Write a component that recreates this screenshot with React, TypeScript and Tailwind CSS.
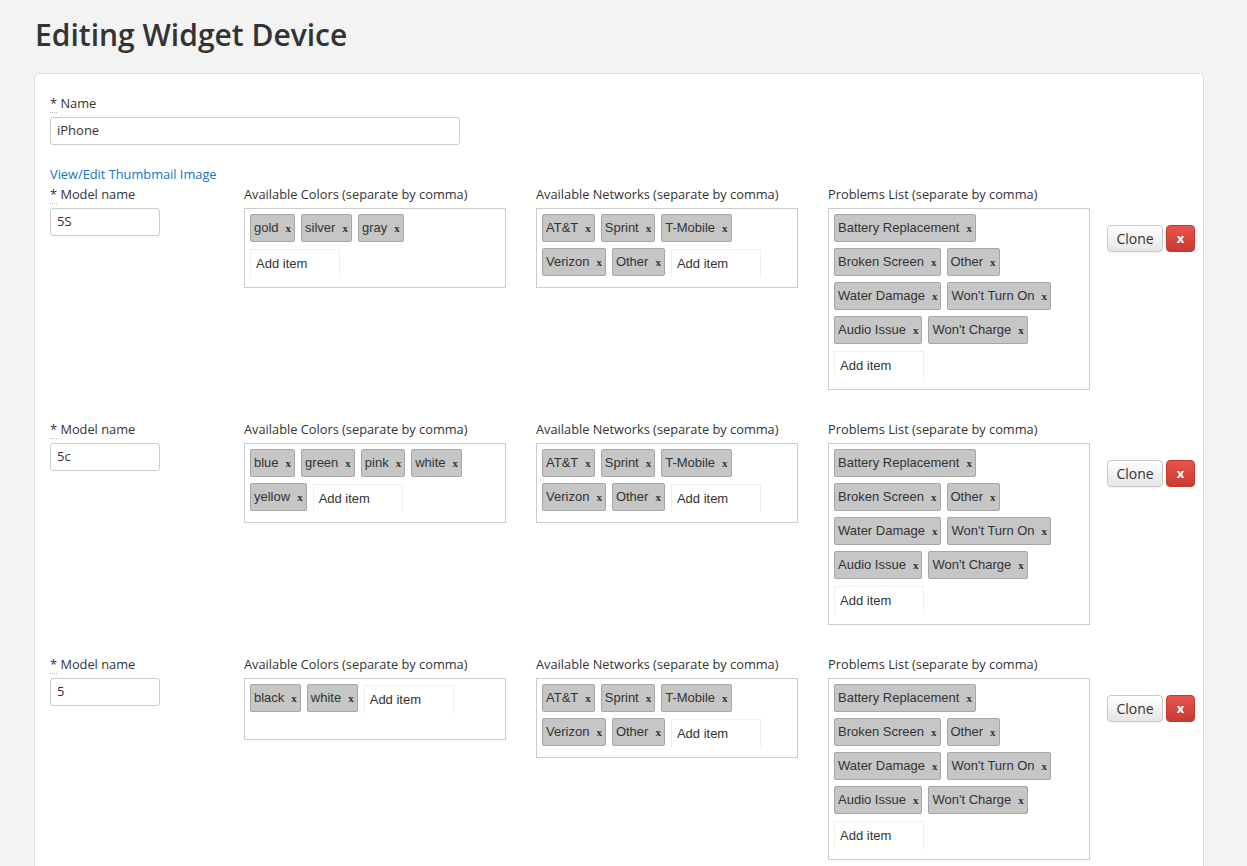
import React from 'react'

type Row = {
  model: string
  colors: string[]
  networks: string[]
  problems: string[]
}

const networks = ['AT&T', 'Sprint', 'T-Mobile', 'Verizon', 'Other']
const problems = [
  'Battery Replacement',
  'Broken Screen',
  'Other',
  'Water Damage',
  "Won't Turn On",
  'Audio Issue',
  "Won't Charge",
]

const rows: Row[] = [
  { model: '5S', colors: ['gold', 'silver', 'gray'], networks, problems },
  { model: '5c', colors: ['blue', 'green', 'pink', 'white', 'yellow'], networks, problems },
  { model: '5', colors: ['black', 'white'], networks, problems },
]

function Req({ children }: { children: React.ReactNode }) {
  return (
    <label className="block h-[18px] leading-[18px] text-[12.8px] text-[#333] font-['Open_Sans',sans-serif]">
      <abbr title="required" className="no-underline border-b border-dotted border-[#bbb]">*</abbr> {children}
    </label>
  )
}

function Tag({ text }: { text: string }) {
  return (
    <span className="inline-flex items-center h-[28px] mr-[6px] mb-[6px] pl-[3px] pr-[3px] bg-[#c6c6c6] border border-[#a6a6a6] rounded-[2px] text-[13px] text-[#333] font-['Liberation_Sans',Arial,sans-serif]">
      <span>{text}</span>
      <span className="ml-[7px] text-[11px] font-bold text-[#333] font-['Liberation_Serif',serif]">x</span>
    </span>
  )
}

function TagBox({ items }: { items: string[] }) {
  return (
    <div className="w-[262px] min-h-[62px] border border-[#cccccc] bg-white pt-[5px] pl-[5px] pr-[5px] pb-[5px] flex flex-wrap content-start">
      {items.map((t, i) => (
        <Tag key={i} text={t} />
      ))}
      {/* input slot is wider than its visible box, so it wraps like the original */}
      <div className="w-[104px] h-[28px] mb-[6px] pt-[1px]">
        <div className="w-[90px] h-[28px] border-t border-l border-r border-[#f0f0f0] pl-[5px] flex items-center text-[13px] text-[#333] font-['Liberation_Sans',Arial,sans-serif]">
          Add item
        </div>
      </div>
    </div>
  )
}

function ColLabel({ children }: { children: React.ReactNode }) {
  return (
    <div className="h-[18px] leading-[18px] text-[12.8px] text-[#333] font-['Open_Sans',sans-serif] mb-[5px]">
      {children}
    </div>
  )
}

function ModelRow({ row }: { row: Row }) {
  return (
    <div className="flex mb-[30px]">
      <div className="w-[194px] shrink-0">
        <Req>Model name</Req>
        <div className="mt-[5px] w-[110px] h-[28px] border border-[#cccccc] rounded-[3px] px-[6px] flex items-center text-[13px] text-[#333] font-['Open_Sans',sans-serif]">
          {row.model}
        </div>
      </div>
      <div className="w-[292px] shrink-0">
        <ColLabel>Available Colors (separate by comma)</ColLabel>
        <TagBox items={row.colors} />
      </div>
      <div className="w-[292px] shrink-0">
        <ColLabel>Available Networks (separate by comma)</ColLabel>
        <TagBox items={row.networks} />
      </div>
      <div className="w-[279px] shrink-0">
        <ColLabel>Problems List (separate by comma)</ColLabel>
        <TagBox items={row.problems} />
      </div>
      <div className="flex items-start gap-[3px] pt-[40px]">
        <button className="w-[56px] h-[27px] rounded-[4px] border border-[#c8c8c8] bg-gradient-to-b from-white to-[#e6e6e6] text-[14px] text-[#333] font-['Open_Sans',sans-serif] shadow-[0_1px_1px_rgba(0,0,0,0.05)]">
          Clone
        </button>
        <button className="w-[29px] h-[27px] rounded-[4px] border border-[#c0392b] bg-gradient-to-b from-[#e8544d] to-[#c73a32] text-[13px] font-bold text-white font-['Open_Sans',sans-serif]">
          x
        </button>
      </div>
    </div>
  )
}

export default function App() {
  return (
    <div className="min-h-screen bg-[#f3f3f3] pl-[34px] pt-[17px] overflow-hidden">
      <h1 className="pl-[1px] h-[36px] leading-[36px] text-[30px] font-semibold text-[#333] font-['Open_Sans',sans-serif]">
        Editing Widget Device
      </h1>
      <div className="mt-[20px] w-[1170px] bg-white border border-[#dddddd] rounded-[5px] pl-[15px] pt-[20px]">
        <Req>Name</Req>
        <div className="mt-[5px] w-[410px] h-[28px] border border-[#cccccc] rounded-[3px] px-[6px] flex items-center text-[13px] text-[#333] font-['Open_Sans',sans-serif]">
          iPhone
        </div>
        <a href="#" className="block mt-[20px] h-[18px] leading-[18px] text-[12.8px] text-[#0e76c8] font-['Open_Sans',sans-serif]">
          View/Edit Thumbmail Image
        </a>
        <div className="mt-[2px]">
          {rows.map((r, i) => (
            <ModelRow key={i} row={r} />
          ))}
        </div>
      </div>
    </div>
  )
}
